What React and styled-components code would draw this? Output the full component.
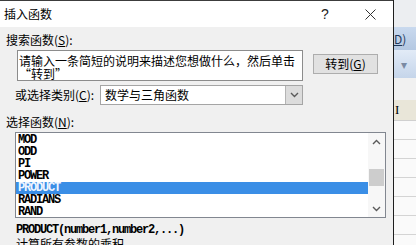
import React from 'react';
import styled, { createGlobalStyle } from 'styled-components';

const GlobalStyle = createGlobalStyle`
  html, body { margin: 0; padding: 0; background: #fff; }
  body { font-family: "Noto Sans CJK SC", "Noto Sans", sans-serif; }
`;

const Screen = styled.div`
  width: 416px;
  height: 245px;
  overflow: hidden;
  display: flex;
`;

const Dialog = styled.div`
  width: 393px;
  flex: none;
  background: #f0f0f0;
  border-right: 1px solid #1e1e1e;
  display: flex;
  flex-direction: column;
  font-size: 12px;
  color: #000;

  & > * {
    flex-shrink: 0;
  }
`;

const TitleBar = styled.div`
  height: 26px;
  border-top: 1px solid #3c3c3c;
  background: #fff;
  display: flex;
  align-items: center;
  padding: 0 8px 0 4px;
  line-height: 14px;
`;

const Title = styled.div`
  flex: 1;
`;

const Help = styled.div`
  width: 20px;
  text-align: center;
  font-family: "Liberation Sans", sans-serif;
  font-size: 14px;
  color: #222;
  margin-right: 20px;
`;

const Close = styled.div`
  width: 30px;
  display: flex;
  justify-content: center;
  align-items: center;
`;

const Label = styled.div`
  line-height: 14px;
  margin: ${p => p.top}px 0 0 ${p => p.left}px;
`;

const Key = styled.span`
  text-decoration: underline;
`;

const SearchRow = styled.div`
  display: flex;
  align-items: flex-start;
  margin-top: 3px;
  padding-left: 17px;
`;

const Prompt = styled.div`
  box-sizing: border-box;
  width: 286px;
  height: 31px;
  border: 1px solid #8c8c8c;
  background: #fff;
  padding: 3px 0 0 1px;
  line-height: 13px;
  overflow: hidden;
  white-space: nowrap;
`;

const GoButton = styled.div`
  box-sizing: border-box;
  margin: 4px 0 0 10px;
  width: 65px;
  height: 20px;
  background: #e1e1e1;
  border: 1px solid #adadad;
  display: flex;
  align-items: center;
  justify-content: center;
  line-height: 14px;
`;

const CategoryRow = styled.div`
  display: flex;
  align-items: center;
  margin-top: 4px;
  padding-left: 15px;
  height: 20px;
`;

const CategoryLabel = styled.div`
  width: 85px;
  line-height: 14px;
`;

const Select = styled.div`
  box-sizing: border-box;
  width: 203px;
  height: 20px;
  border: 1px solid #a5a5a5;
  background: #fff;
  display: flex;
  align-items: stretch;
`;

const SelectValue = styled.div`
  flex: 1;
  padding-left: 4px;
  line-height: 18px;
`;

const DropButton = styled.div`
  width: 16px;
  background: #dcdcdc;
  border-left: 1px solid #b4b4b4;
  display: flex;
  align-items: center;
  justify-content: center;
`;

const ListBox = styled.div`
  box-sizing: border-box;
  margin: 3px 0 0 15px;
  width: 371px;
  height: 86px;
  border: 1px solid #828790;
  background: #fff;
  display: flex;
  overflow: hidden;
`;

const Items = styled.div`
  flex: 1;
  padding-top: 1px;
`;

const Mono = styled.div`
  font-family: "Liberation Mono", monospace;
  font-size: 12px;
  font-weight: bold;
  letter-spacing: -1.2px;
`;

const Item = styled(Mono)`
  height: 12px;
  line-height: 12px;
  padding-left: 2px;
  background: ${p => (p.selected ? '#3a8ee6' : 'transparent')};
  color: ${p => (p.selected ? '#eef5ff' : '#000')};
`;

const ScrollBar = styled.div`
  width: 17px;
  background: #f7f7f7;
  display: flex;
  flex-direction: column;
`;

const ScrollArrow = styled.div`
  height: 17px;
  display: flex;
  align-items: center;
  justify-content: center;
`;

const Thumb = styled.div`
  margin: 19px 1px 0;
  height: 17px;
  background: #cdcdcd;
`;

const ScrollGap = styled.div`
  flex: 1;
`;

const Signature = styled(Mono)`
  margin: 5px 0 0 16px;
  line-height: 14px;
`;

const Description = styled.div`
  margin-left: 16px;
  line-height: 14px;
`;

const Sheet = styled.div`
  flex: 1;
  display: flex;
  flex-direction: column;
  background: #fafafa;
  overflow: hidden;
`;

const Band = styled.div`
  flex: none;
  height: ${p => p.h}px;
  background: ${p => p.bg};
  border-bottom: ${p => (p.line ? `1px solid ${p.line}` : 'none')};
  display: flex;
  align-items: center;
  font-size: 12px;
  line-height: 14px;
  color: ${p => p.color || '#000'};
  padding-left: ${p => p.pad || 0}px;
`;

const Cursor = styled.span`
  font-family: "Liberation Serif", serif;
  font-size: 13px;
`;

const Chevron = ({ up }) => (
  <svg width="9" height="6" viewBox="0 0 9 6">
    <path
      d={up ? 'M1 5 L4.5 1.5 L8 5' : 'M1 1 L4.5 4.5 L8 1'}
      fill="none"
      stroke="#5a5a5a"
      strokeWidth="1.4"
    />
  </svg>
);

const functions = ['MOD', 'ODD', 'PI', 'POWER', 'PRODUCT', 'RADIANS', 'RAND'];

export default function App() {
  return (
    <Screen>
      <GlobalStyle />
      <Dialog>
        <TitleBar>
          <Title>插入函数</Title>
          <Help>?</Help>
          <Close>
            <svg width="11" height="11" viewBox="0 0 11 11">
              <path d="M0.5 0.5 L10.5 10.5 M10.5 0.5 L0.5 10.5" stroke="#333" strokeWidth="1" />
            </svg>
          </Close>
        </TitleBar>

        <Label top={6} left={6}>搜索函数(<Key>S</Key>):</Label>
        <SearchRow>
          <Prompt>
            请输入一条简短的说明来描述您想做什么，然后单击
            <br />
            “转到”
          </Prompt>
          <GoButton>转到(<Key>G</Key>)</GoButton>
        </SearchRow>

        <CategoryRow>
          <CategoryLabel>或选择类别(<Key>C</Key>):</CategoryLabel>
          <Select>
            <SelectValue>数学与三角函数</SelectValue>
            <DropButton>
              <Chevron />
            </DropButton>
          </Select>
        </CategoryRow>

        <Label top={10} left={6}>选择函数(<Key>N</Key>):</Label>
        <ListBox>
          <Items>
            {functions.map(f => (
              <Item key={f} selected={f === 'PRODUCT'}>{f}</Item>
            ))}
          </Items>
          <ScrollBar>
            <ScrollArrow>
              <Chevron up />
            </ScrollArrow>
            <Thumb />
            <ScrollGap />
            <ScrollArrow>
              <Chevron />
            </ScrollArrow>
          </ScrollBar>
        </ListBox>

        <Signature>PRODUCT(number1,number2,...)</Signature>
        <Description>计算所有参数的乘积</Description>
      </Dialog>

      <Sheet>
        <Band h={27} bg="#eceef1" />
        <Band h={23} bg="linear-gradient(#c9d9ee, #b4c8e2)" color="#1e395b">
          <Key>D</Key>)
        </Band>
        <Band h={28} bg="linear-gradient(#e2ebf7, #c5d5ea)" color="#7a8aa3" pad={7}>
          ▾
        </Band>
        <Band h={22} bg="#f1f1f1" />
        <Band h={20} bg="#e9e6d9" pad={1} line="#d0d0d0">
          <Cursor>I</Cursor>
        </Band>
        {[0, 1, 2, 3, 4, 5].map(i => (
          <Band key={i} h={18} bg="#fafafa" line="#d4d4d4" />
        ))}
      </Sheet>
    </Screen>
  );
}
